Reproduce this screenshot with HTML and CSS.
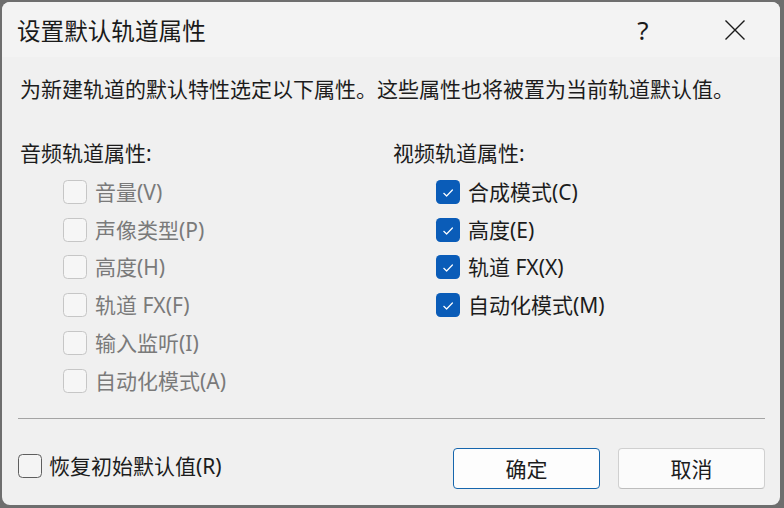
FILE: index.html
```html
<!DOCTYPE html>
<html lang="zh-CN">
<head>
<meta charset="utf-8">
<title>设置默认轨道属性</title>
<link rel="stylesheet" href="styles.css">
</head>
<body>
<div class="dialog">
  <div class="titlebar">
    <div class="title">设置默认轨道属性</div>
    <div class="help">?</div>
    <div class="close">
      <svg width="22" height="22" viewBox="0 0 22 22"><path d="M1.5 1.5 L20.5 20.5 M20.5 1.5 L1.5 20.5" stroke="#1a1a1a" stroke-width="1.4" fill="none"/></svg>
    </div>
  </div>
  <div class="content">
    <p class="desc">为新建轨道的默认特性选定以下属性。这些属性也将被置为当前轨道默认值。</p>
    <div class="groups">
      <div class="group">
        <div class="heading">音频轨道属性:</div>
        <div class="row disabled"><span class="box"></span><span class="label">音量(V)</span></div>
        <div class="row disabled"><span class="box"></span><span class="label">声像类型(P)</span></div>
        <div class="row disabled"><span class="box"></span><span class="label">高度(H)</span></div>
        <div class="row disabled"><span class="box"></span><span class="label">轨道 FX(F)</span></div>
        <div class="row disabled"><span class="box"></span><span class="label">输入监听(I)</span></div>
        <div class="row disabled"><span class="box"></span><span class="label">自动化模式(A)</span></div>
      </div>
      <div class="group">
        <div class="heading">视频轨道属性:</div>
        <div class="row"><span class="box checked"><svg width="24" height="24" viewBox="0 0 24 24"><path d="M7.8 13.3 L10.6 16 L16.4 10" stroke="#fff" stroke-width="1.2" fill="none" stroke-linecap="round" stroke-linejoin="round"/></svg></span><span class="label">合成模式(C)</span></div>
        <div class="row"><span class="box checked"><svg width="24" height="24" viewBox="0 0 24 24"><path d="M7.8 13.3 L10.6 16 L16.4 10" stroke="#fff" stroke-width="1.2" fill="none" stroke-linecap="round" stroke-linejoin="round"/></svg></span><span class="label">高度(E)</span></div>
        <div class="row"><span class="box checked"><svg width="24" height="24" viewBox="0 0 24 24"><path d="M7.8 13.3 L10.6 16 L16.4 10" stroke="#fff" stroke-width="1.2" fill="none" stroke-linecap="round" stroke-linejoin="round"/></svg></span><span class="label">轨道 FX(X)</span></div>
        <div class="row"><span class="box checked"><svg width="24" height="24" viewBox="0 0 24 24"><path d="M7.8 13.3 L10.6 16 L16.4 10" stroke="#fff" stroke-width="1.2" fill="none" stroke-linecap="round" stroke-linejoin="round"/></svg></span><span class="label">自动化模式(M)</span></div>
      </div>
    </div>
    <div class="separator"></div>
    <div class="footer">
      <div class="restore"><span class="box plain"></span><span class="label">恢复初始默认值(R)</span></div>
      <div class="buttons">
        <button class="btn primary">确定</button>
        <button class="btn">取消</button>
      </div>
    </div>
  </div>
</div>
</body>
</html>
```
FILE: styles.css
```css
html, body {
  margin: 0;
  padding: 0;
}
body {
  width: 784px;
  height: 508px;
  box-sizing: border-box;
  padding: 2px 4px 3px 2px;
  background: #6e6e6e;
  font-family: "Noto Sans", "Noto Sans CJK SC", sans-serif;
  color: #1c1c1c;
  overflow: hidden;
}
.dialog {
  width: 778px;
  height: 503px;
  background: #f0f0f0;
  border-radius: 8px;
  overflow: hidden;
  display: flex;
  flex-direction: column;
}
.titlebar {
  height: 55px;
  flex: none;
  background: #f3f3f3;
  display: flex;
  align-items: center;
  padding-left: 15px;
}
.title {
  font-size: 23.6px;
  line-height: 30px;
  flex: 1;
  color: #1a1a1a;
  font-family: "Noto Sans CJK SC", sans-serif;
}
.help {
  font-size: 26px;
  line-height: 30px;
  width: 20px;
  text-align: center;
  margin-right: 71px;
  font-family: "Noto Sans", sans-serif;
  font-weight: 400;
  color: #1a1a1a;
}
.close {
  width: 22px;
  height: 22px;
  margin-right: 34px;
  display: flex;
}
.content {
  flex: 1;
  display: flex;
  flex-direction: column;
  padding: 17px 15px 0 16px;
}
.desc {
  margin: 0;
  font-size: 21px;
  line-height: 28px;
  padding-left: 2px;
  font-family: "Noto Sans CJK SC", sans-serif;
}
.groups {
  display: grid;
  grid-template-columns: 373px 1fr;
  margin-top: 37px;
  padding-left: 2px;
}
.heading {
  font-size: 21px;
  line-height: 28px;
  margin-bottom: 6px;
}
.row {
  height: 37.8px;
  display: flex;
  align-items: center;
  padding-left: 43px;
}
.box {
  width: 24px;
  height: 24px;
  box-sizing: border-box;
  border-radius: 4.5px;
  border: 1px solid #c6c6c6;
  background: #f6f6f6;
  flex: none;
  display: flex;
}
.box.checked {
  border: none;
  background: #0a5cb8;
}
.box.plain {
  border: 1px solid #5e5e5e;
  background: #f4f4f4;
}
.label {
  font-size: 21px;
  line-height: 28px;
  margin-left: 8px;
  color: #1c1c1c;
}
.disabled .label {
  color: #7a7a7a;
}
.separator {
  height: 1px;
  background: #a4a4a4;
  margin-top: 18px;
}
.footer {
  display: flex;
  align-items: center;
  justify-content: space-between;
  margin-top: 29px;
}
.restore {
  display: flex;
  align-items: center;
  margin-top: -4px;
}
.restore .label {
  margin-left: 7px;
}
.buttons {
  display: flex;
  gap: 18px;
}
.btn {
  width: 147px;
  height: 41px;
  box-sizing: border-box;
  border-radius: 4px;
  border: 1px solid #d0d0d0;
  border-bottom-color: #bdbdbd;
  background: #fbfbfb;
  font-family: "Noto Sans CJK SC", sans-serif;
  font-size: 21px;
  color: #1c1c1c;
  padding: 0;
  line-height: 28px;
}
.btn.primary {
  border: 1px solid #1666ad;
  background: #fdfdfd;
}
```
